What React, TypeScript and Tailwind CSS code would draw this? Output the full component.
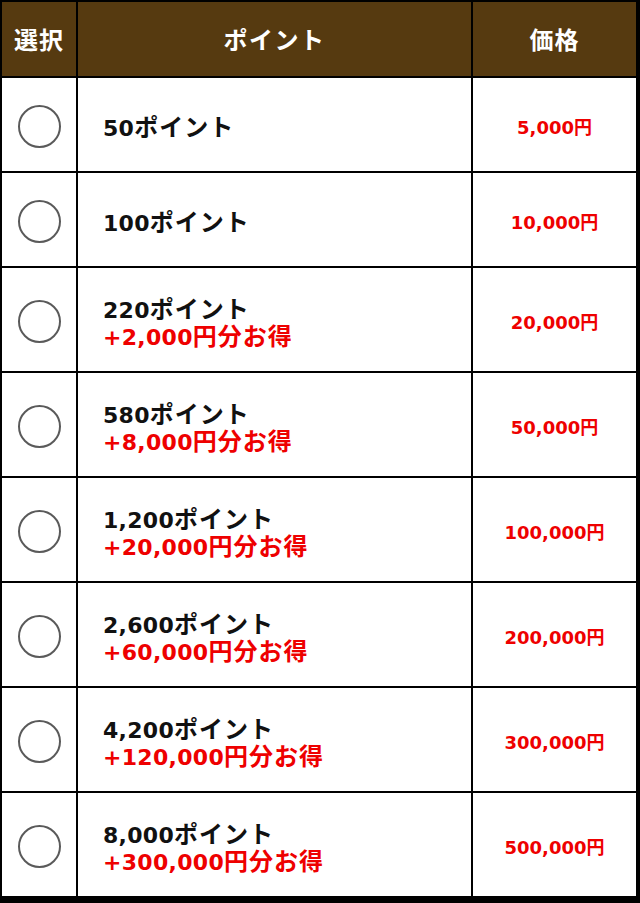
const PLANS = [
  { points: '50', bonus: null, price: '5,000' },
  { points: '100', bonus: null, price: '10,000' },
  { points: '220', bonus: '2,000', price: '20,000' },
  { points: '580', bonus: '8,000', price: '50,000' },
  { points: '1,200', bonus: '20,000', price: '100,000' },
  { points: '2,600', bonus: '60,000', price: '200,000' },
  { points: '4,200', bonus: '120,000', price: '300,000' },
  { points: '8,000', bonus: '300,000', price: '500,000' },
];

export default function App() {
  return (
    <div className="w-[640px] h-[903px] bg-black pt-[2px] pl-[2px] pr-[4px] pb-[7px] font-['DejaVu_Sans','Noto_Sans_CJK_JP',sans-serif]">
      <div className="grid grid-cols-[74px_393px_163px] grid-rows-[74px_93px_93px_repeat(6,103px)] gap-[2px]">
        <div className="bg-[#563a10] flex items-center justify-center text-white text-[24px] font-bold font-['Noto_Sans_CJK_JP',sans-serif] tracking-[1px]">
          選択
        </div>
        <div className="bg-[#563a10] flex items-center justify-center text-white text-[24px] font-bold font-['Noto_Sans_CJK_JP',sans-serif] tracking-[1.5px]">
          ポイント
        </div>
        <div className="bg-[#563a10] flex items-center justify-center text-white text-[24px] font-bold font-['Noto_Sans_CJK_JP',sans-serif] tracking-[1px]">
          価格
        </div>

        {PLANS.map((p) => (
          <div key={p.points} className="contents">
            <div className="bg-white flex items-center justify-center pt-[3px]">
              <div className="w-[43px] h-[43px] rounded-full border-2 border-[#5a5a5a]" />
            </div>
            <div className="bg-white flex flex-col justify-center pl-[25px] pt-[10px] leading-[25px] font-bold">
              <div className="text-[#111]">
                <span className="text-[22px] tracking-[0.3px]">{p.points}</span>
                <span className="text-[24px] tracking-[1px]">ポイント</span>
              </div>
              {p.bonus && (
                <div className="text-[#ee0000]">
                  <span className="text-[22px] tracking-[0.3px]">+{p.bonus}</span>
                  <span className="text-[24px] tracking-[1px]">円分お得</span>
                </div>
              )}
            </div>
            <div className="bg-white flex items-center justify-center pt-[6px]">
              <span className="text-[18px] font-bold text-[#ee0000]">{p.price}円</span>
            </div>
          </div>
        ))}
      </div>
    </div>
  );
}
